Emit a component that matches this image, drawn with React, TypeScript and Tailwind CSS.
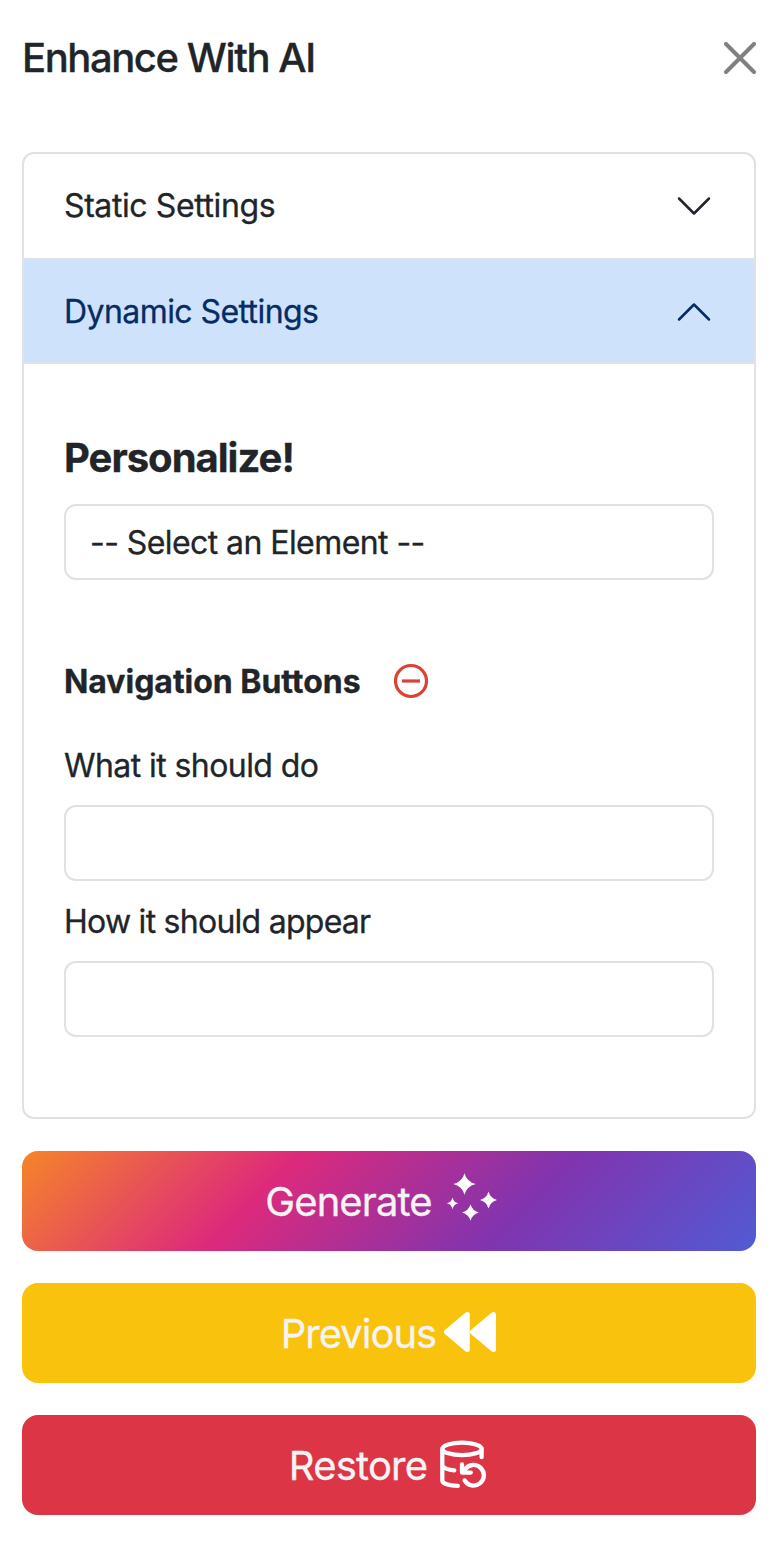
import type { ReactNode } from "react";

function Chevron({ up = false }: { up?: boolean }) {
  return (
    <svg viewBox="0 0 16 16" className={up ? "mt-0.5 size-10 rotate-180" : "size-10"} fill="none" stroke="currentColor" strokeLinecap="round" strokeLinejoin="round">
      <path d="m2 5 6 6 6-6" />
    </svg>
  );
}

function Sparkles() {
  return (
    <svg width="56" height="54" viewBox="444 1170 56 54" fill="white" className="mb-2">
      <path d="M464.5 1173.2Q466.800 1181.800 475.7 1184Q466.800 1186.200 464.5 1194.8Q462.200 1186.200 453.300 1184Q462.200 1181.800 464.5 1173.2Z" />
      <path d="M488.500 1191.500Q490.300 1198.200 497 1200Q490.300 1201.800 488.500 1208.500Q486.700 1201.800 480 1200Q486.700 1198.200 488.500 1191.500Z" />
      <path d="M470.500 1204.300Q472.300 1210.700 478.900 1212.500Q472.300 1214.300 470.500 1220.700Q468.700 1214.300 462.100 1212.500Q468.700 1210.700 470.500 1204.300Z" />
      <path d="M452.500 1197.400Q453.600 1202.200 458.200 1203.300Q453.600 1204.400 452.500 1209.200Q451.400 1204.400 446.800 1203.300Q451.400 1202.200 452.500 1197.400Z" />
    </svg>
  );
}

function Rewind() {
  return (
    <svg width="54" height="42" viewBox="0 0 54 42" fill="white" stroke="white" strokeWidth="5" strokeLinejoin="round" className="mb-0.5">
      <path d="M3.500 21 24.300 3.500V38.500Z" />
      <path d="M29.500 21 50.400 3.500V38.500Z" />
    </svg>
  );
}

function DatabaseRestore() {
  return (
    <svg width="48" height="50" viewBox="439 1439 48 50" fill="none" stroke="white" strokeWidth="4.300" strokeLinecap="round" strokeLinejoin="round" className="mb-0.5">
      <ellipse cx="462" cy="1448.900" rx="19.600" ry="6.200" />
      <path d="M442.300 1449v31.500c0 3 6.500 5 15.500 5.400M442.300 1465.500c1.500 2.700 6 4.400 12 4.900M481.600 1449v8.200" />
      <path d="M462 1464.500v8.100h8.800M463 1471.600l2.200-2.400A10.300 10.300 0 1 1 464.600 1480.400" />
    </svg>
  );
}

function Field({ label, text }: { label: string; text: string }) {
  return (
    <label className="flex flex-col">
      <span className={`h-12 pt-px leading-[48px] ${text}`}>{label}</span>
      <input type="text" className="mt-4 h-[76px] w-full rounded-xl border-2 border-[#dee2e6] px-6 outline-none" />
    </label>
  );
}

function ActionButton({ label, className, text, children }: { label: string; className: string; text: string; children: ReactNode }) {
  return (
    <button type="button" className={`flex h-[100px] w-full items-center justify-center rounded-2xl text-[40px] leading-[60px] text-[#f4f4f4] ${className}`}>
      <span className={`pt-0.5 ${text}`}>{label}</span>
      {children}
    </button>
  );
}

export default function App() {
  return (
    <main className="h-[1554px] w-full bg-white pl-[22px] pr-5 font-['Inter','Liberation_Sans',sans-serif] text-[32px] text-[#212529] [-webkit-text-stroke:0.3px]">
      <header className="flex h-[152px] items-start justify-between pt-[34px]">
        <h1 className="text-[40px] font-medium leading-[48px] tracking-[-1.43px]">Enhance With AI</h1>
        <button type="button" aria-label="Close" className="mt-2">
          <svg viewBox="0 0 16 16" className="size-8" fill="none" stroke="#808080" strokeWidth="2" strokeLinecap="round">
            <path d="m1 1 14 14M15 1 1 15" />
          </svg>
        </button>
      </header>

      <section className="h-[967px] overflow-hidden rounded-xl border-2 border-[#dee2e6]">
        <button type="button" className="flex h-[104px] w-full items-center justify-between px-10">
          <span className="tracking-[-0.4px]">Static Settings</span>
          <Chevron />
        </button>
        <button type="button" className="flex h-[106px] w-full items-center justify-between border-y-2 border-[#dee2e6] bg-[#cfe2fb] px-10 text-[#052c65]">
          <span className="pt-0.5 tracking-[-0.57px]">Dynamic Settings</span>
          <Chevron up />
        </button>
        <div className="px-10 pt-[70px]">
          <h2 className="text-[40px] font-bold leading-[48px] tracking-[-1px]">Personalize!</h2>
          <button type="button" className="mt-[22px] flex h-[76px] w-full items-center rounded-xl border-2 border-[#dee2e6] px-6">
            <span className="pt-0.5 tracking-[-0.57px]">-- Select an Element --</span>
          </button>
          <div className="mt-[77px] flex h-12 items-center gap-8">
            <strong className="pt-0.5 font-bold tracking-[-0.03px]">Navigation Buttons</strong>
            <button type="button" aria-label="Remove">
              <svg width="36" height="36" viewBox="0 0 36 36" fill="none" stroke="#dc4135" strokeWidth="3.200">
                <circle cx="18" cy="18" r="15.500" />
                <path d="M9 18h18" />
              </svg>
            </button>
          </div>
          <div className="mt-9 flex flex-col gap-4">
            <Field label="What it should do" text="tracking-[-0.57px]" />
            <Field label="How it should appear" text="tracking-[-0.74px]" />
          </div>
        </div>
      </section>

      <div className="mt-8 flex flex-col gap-8">
        <ActionButton label="Generate" text="tracking-[-0.9px]" className="gap-3 bg-[linear-gradient(135deg,#f58529,#dd2a7b,#8134af,#515bd4)] pr-[13px]">
          <Sparkles />
        </ActionButton>
        <ActionButton label="Previous" text="tracking-[-1px]" className="gap-[7px] bg-[#f9c20d]">
          <Rewind />
        </ActionButton>
        <ActionButton label="Restore" text="tracking-[-0.8px]" className="gap-3 bg-[#dc3545] pr-0.5">
          <DatabaseRestore />
        </ActionButton>
      </div>
    </main>
  );
}
